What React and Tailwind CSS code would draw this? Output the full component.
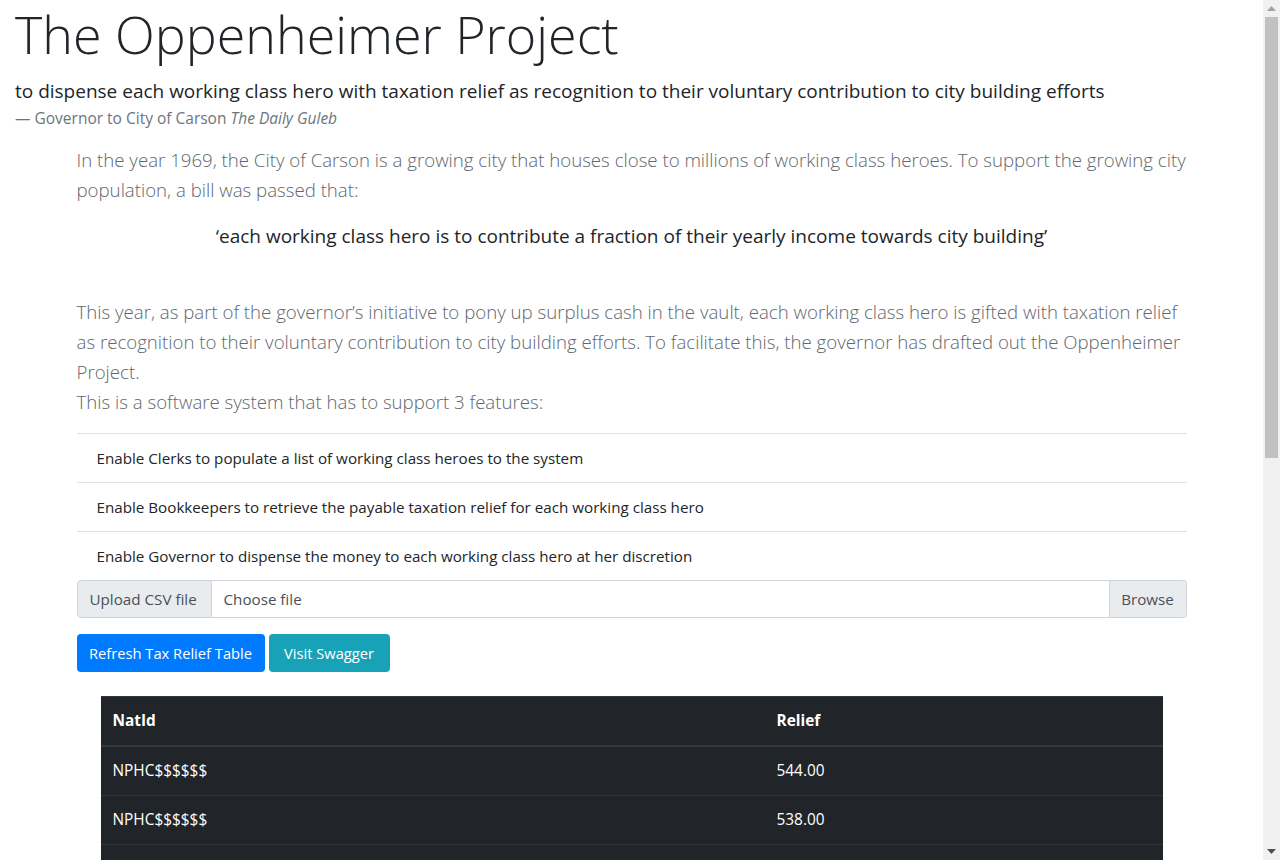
import React from "react";

const rows = [
  ["NPHC$$$$$$", "544.00"],
  ["NPHC$$$$$$", "538.00"],
  ["NPHC$$$$$$", "512.00"],
  ["NPHC$$$$$$", "498.00"],
  ["NPHC$$$$$$", "486.00"],
  ["NPHC$$$$$$", "471.00"],
  ["NPHC$$$$$$", "465.00"],
  ["NPHC$$$$$$", "452.00"],
  ["NPHC$$$$$$", "440.00"],
  ["NPHC$$$$$$", "433.00"],
  ["NPHC$$$$$$", "421.00"],
  ["NPHC$$$$$$", "415.00"],
  ["NPHC$$$$$$", "402.00"],
  ["NPHC$$$$$$", "398.00"],
  ["NPHC$$$$$$", "387.00"],
  ["NPHC$$$$$$", "375.00"],
  ["NPHC$$$$$$", "360.00"],
];

const features = [
  "Enable Clerks to populate a list of working class heroes to the system",
  "Enable Bookkeepers to retrieve the payable taxation relief for each working class hero",
  "Enable Governor to dispense the money to each working class hero at her discretion",
];

function Scrollbar() {
  return (
    <div className="w-[17px] h-[860px] shrink-0 bg-[#f1f1f1] flex flex-col items-center">
      <div className="h-[17px] flex items-center justify-center">
        <svg width="9" height="5" viewBox="0 0 9 5"><path d="M0 5 L4.5 0 L9 5 Z" fill="#a3a3a3" /></svg>
      </div>
      <div className="w-[13px] h-[441px] bg-[#c1c1c1]" />
      <div className="flex-1" />
      <div className="h-[17px] flex items-center justify-center">
        <svg width="9" height="5" viewBox="0 0 9 5"><path d="M0 0 L9 0 L4.5 5 Z" fill="#505050" /></svg>
      </div>
    </div>
  );
}

export default function App() {
  return (
    <div className="flex items-start bg-white">
      <div className="w-[1263px] shrink-0 font-['Open_Sans',sans-serif] text-[#212529]">
        <div className="px-[15px]">
          <h1 className="text-[52px] font-light leading-[67px] mb-2">The Oppenheimer Project</h1>
          <div className="mb-[15px]">
            <p className="text-[19px] leading-[30px] pt-px">
              to dispense each working class hero with taxation relief as recognition to their voluntary contribution to city building efforts
            </p>
            <div className="text-[15.5px] leading-6 text-[#6c757d]">
              — Governor to City of Carson <cite className="italic">The Daily Guleb</cite>
            </div>
          </div>
        </div>
        <div className="max-w-[1140px] mx-auto px-[15px] pb-10">
          <p className="text-[18.65px] font-light leading-[30px] text-[#60676e] mb-4">
            In the year 1969, the City of Carson is a growing city that houses close to millions of working class heroes. To support the growing city population, a bill was passed that:
          </p>
          <p className="text-[19px] leading-[30px] text-center mb-[46px]">
            ‘each working class hero is to contribute a fraction of their yearly income towards city building’
          </p>
          <p className="text-[18.65px] font-light leading-[30px] text-[#60676e] mb-4">
            This year, as part of the governor’s initiative to pony up surplus cash in the vault, each working class hero is gifted with taxation relief as recognition to their voluntary contribution to city building efforts. To facilitate this, the governor has drafted out the Oppenheimer Project.
            <br />
            This is a software system that has to support 3 features:
          </p>
          <ul>
            {features.map((f) => (
              <li key={f} className="border-t border-[#dee2e6] px-5 py-3 text-[15.2px] leading-6">
                {f}
              </li>
            ))}
          </ul>
          <div className="flex h-[38px] text-[15.2px] leading-6 text-[#495057]">
            <div className="w-[135px] flex items-center px-3 bg-[#e9ecef] border border-[#ced4da] rounded-l">Upload CSV file</div>
            <div className="flex-1 flex border border-l-0 border-[#ced4da] rounded-r">
              <div className="flex-1 flex items-center px-3">Choose file</div>
              <div className="w-[77px] flex items-center justify-center bg-[#e9ecef] border-l border-[#ced4da] rounded-r">Browse</div>
            </div>
          </div>
          <div className="flex gap-1 mt-4 mb-6">
            <button className="w-[188px] h-[38px] rounded bg-[#007bff] text-white text-[14.7px] leading-6">Refresh Tax Relief Table</button>
            <button className="w-[121px] h-[38px] rounded bg-[#17a2b8] text-white text-[14.7px] leading-6">Visit Swagger</button>
          </div>
          <div className="px-6">
            <table className="w-full bg-[#212529] text-white text-[15.4px] leading-6 border-collapse">
              <thead>
                <tr className="border-t border-b-2 border-[#32383e]">
                  <th className="w-[664px] text-left font-bold px-3 py-3">NatId</th>
                  <th className="text-left font-bold px-3 py-3">Relief</th>
                </tr>
              </thead>
              <tbody>
                {rows.map((r, i) => (
                  <tr key={i} className="border-t border-[#32383e]">
                    <td className="px-3 py-3">{r[0]}</td>
                    <td className="px-3 py-3">{r[1]}</td>
                  </tr>
                ))}
              </tbody>
            </table>
          </div>
        </div>
      </div>
      <Scrollbar />
    </div>
  );
}
